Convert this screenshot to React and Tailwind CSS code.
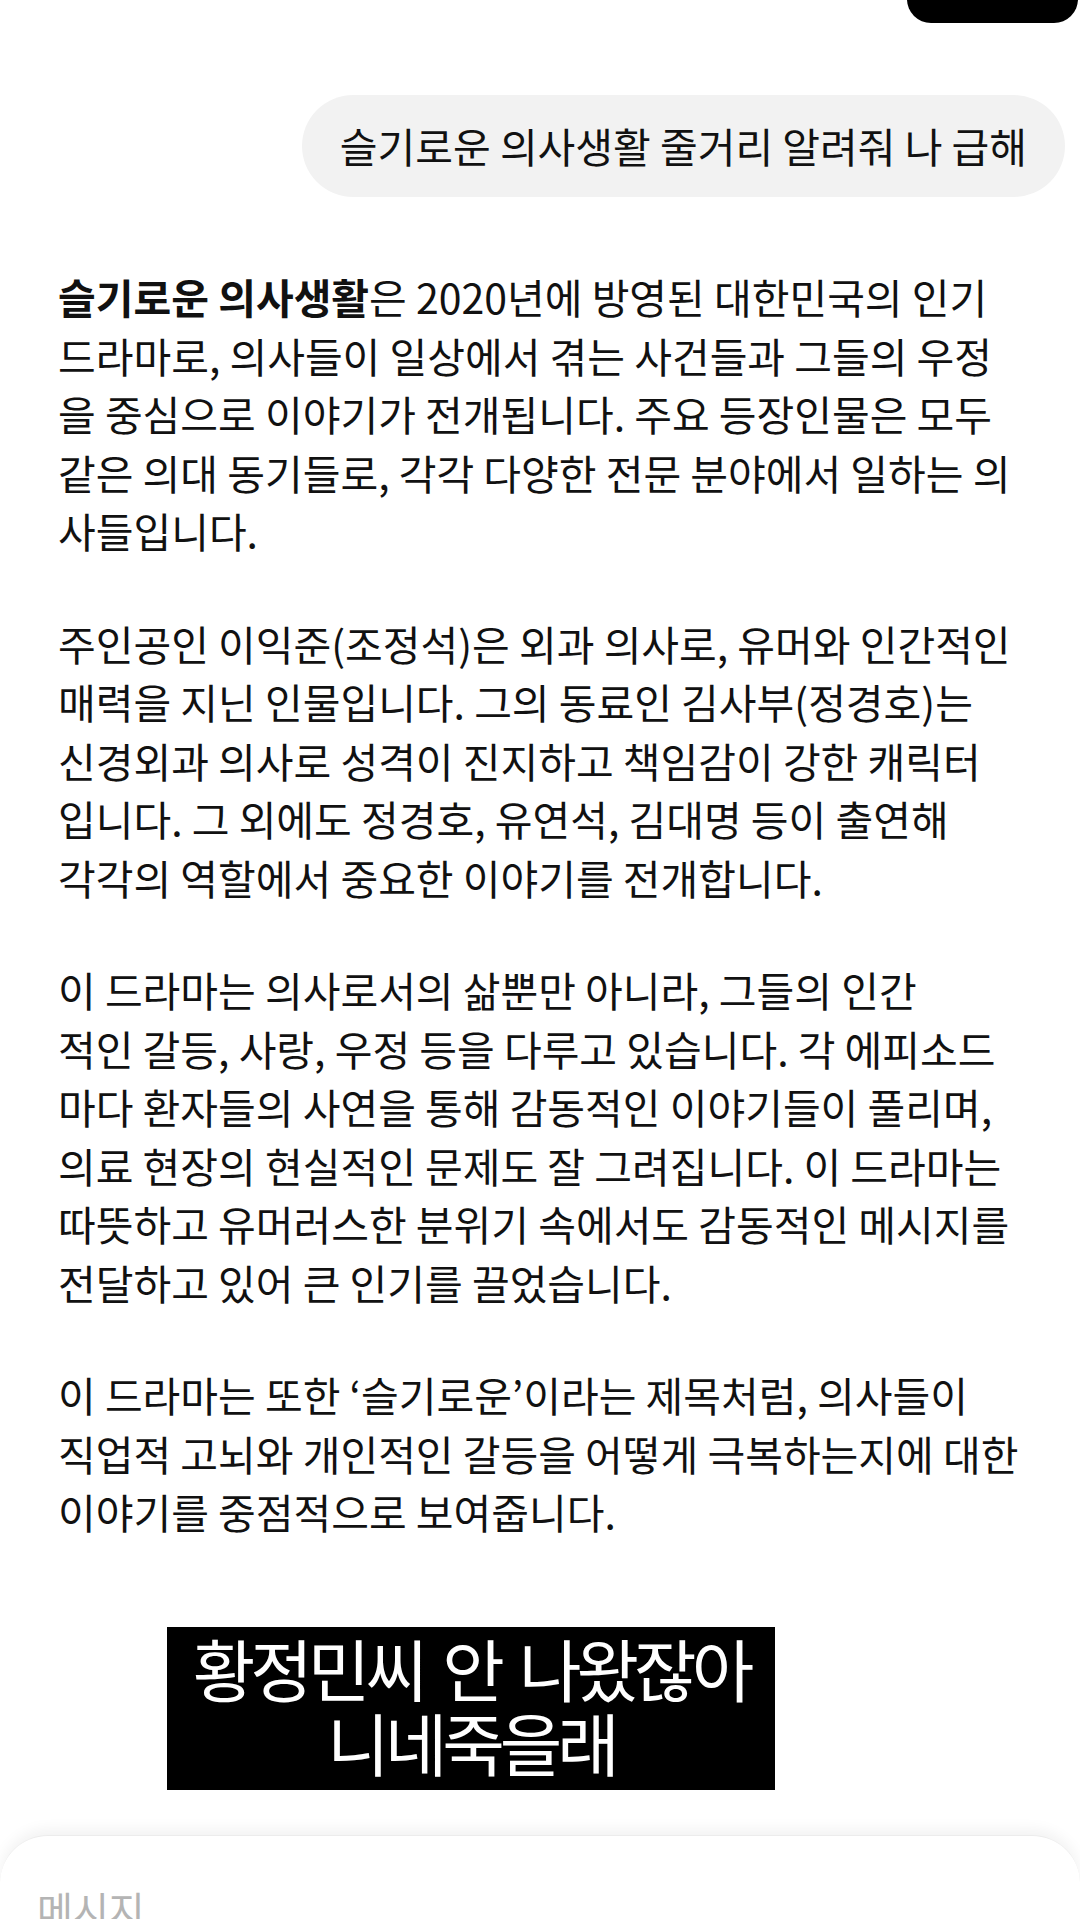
import React from "react";

const paragraphs = [
  [
    null,
    "드라마로, 의사들이 일상에서 겪는 사건들과 그들의 우정",
    "을 중심으로 이야기가 전개됩니다. 주요 등장인물은 모두",
    "같은 의대 동기들로, 각각 다양한 전문 분야에서 일하는 의",
    "사들입니다.",
  ],
  [
    "주인공인 이익준(조정석)은 외과 의사로, 유머와 인간적인",
    "매력을 지닌 인물입니다. 그의 동료인 김사부(정경호)는",
    "신경외과 의사로 성격이 진지하고 책임감이 강한 캐릭터",
    "입니다. 그 외에도 정경호, 유연석, 김대명 등이 출연해",
    "각각의 역할에서 중요한 이야기를 전개합니다.",
  ],
  [
    "이 드라마는 의사로서의 삶뿐만 아니라, 그들의 인간",
    "적인 갈등, 사랑, 우정 등을 다루고 있습니다. 각 에피소드",
    "마다 환자들의 사연을 통해 감동적인 이야기들이 풀리며,",
    "의료 현장의 현실적인 문제도 잘 그려집니다. 이 드라마는",
    "따뜻하고 유머러스한 분위기 속에서도 감동적인 메시지를",
    "전달하고 있어 큰 인기를 끌었습니다.",
  ],
  [
    "이 드라마는 또한 ‘슬기로운’이라는 제목처럼, 의사들이",
    "직업적 고뇌와 개인적인 갈등을 어떻게 극복하는지에 대한",
    "이야기를 중점적으로 보여줍니다.",
  ],
];

const App = () => {
  return (
    <div
      className="relative w-[1080px] h-[1919px] overflow-hidden bg-white text-[#111111]"
      style={{ fontFamily: '"Noto Sans CJK KR", "Noto Sans", sans-serif' }}
    >
      {/* top-right overlay pill */}
      <div className="absolute top-[-40px] right-[2px] w-[171px] h-[63px] rounded-[24px] bg-black" />

      {/* user bubble */}
      <div className="flex justify-end pt-[95px] pr-[15px]">
        <div className="flex items-center h-[102px] px-[38px] rounded-full bg-[#f2f2f2] text-[41px] whitespace-nowrap">
          슬기로운 의사생활 줄거리 알려줘 나 급해
        </div>
      </div>

      {/* answer */}
      <div className="pl-[58px] pt-[70px] text-[41px] leading-[58.5px] whitespace-nowrap">
        {paragraphs.map((lines, i) => (
          <div key={i} className={i < paragraphs.length - 1 ? "mb-[54px]" : ""}>
            {lines.map((line, j) =>
              line === null ? (
                <div key={j}>
                  <span className="font-bold">슬기로운 의사생활</span>은 2020년에 방영된 대한민국의 인기
                </div>
              ) : (
                <div key={j}>{line}</div>
              )
            )}
          </div>
        ))}
      </div>

      {/* caption */}
      <div className="mt-[86px] ml-[167px] w-[608px] h-[163px] bg-black text-white text-center text-[68px] leading-[74px] tracking-[-5px] [word-spacing:9px] pt-[4px]">
        <div>황정민씨 안 나왔잖아</div>
        <div>니네죽을래</div>
      </div>

      {/* message input */}
      <div className="mt-[45px] h-[140px] rounded-t-[48px] border-t border-[#ececec] bg-white shadow-[0_-6px_14px_rgba(0,0,0,0.05)] pl-[37px] pt-[50px]">
        <div className="text-[39px] leading-[44px] text-[#b4b4b4]">메시지</div>
      </div>
    </div>
  );
};

export default App;
